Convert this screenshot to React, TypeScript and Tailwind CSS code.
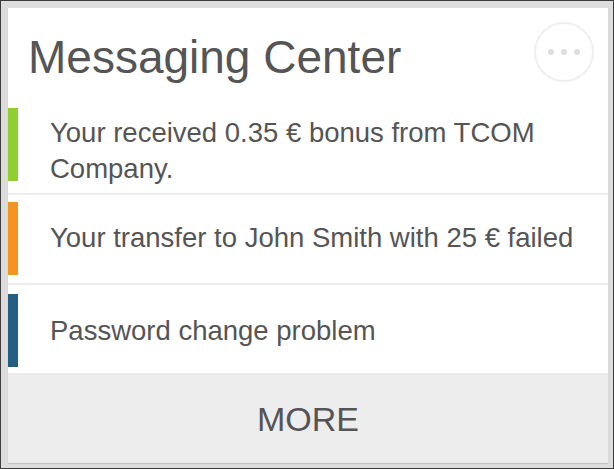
const messages = [
  {
    id: 1,
    text: "Your received 0.35 € bonus from TCOM Company.",
    bar: "bg-[#8fcf32]",
    row: "h-[96px]",
    barOffset: "mt-[9px]",
    textOffset: "pt-[16px]",
  },
  {
    id: 2,
    text: "Your transfer to John Smith with 25 € failed",
    bar: "bg-[#f7941d]",
    row: "h-[90px]",
    barOffset: "mt-[7px]",
    textOffset: "pt-[25px]",
  },
  {
    id: 3,
    text: "Password change problem",
    bar: "bg-[#245e82]",
    row: "h-[90px]",
    barOffset: "mt-[9px]",
    textOffset: "pt-[28px]",
  },
];

const MoreButton = () => (
  <button className="flex h-[60px] w-[60px] items-center justify-center gap-[7px] rounded-full border-2 border-[#efefef] bg-white">
    <span className="h-[6px] w-[6px] rounded-full bg-[#dedede]" />
    <span className="h-[6px] w-[6px] rounded-full bg-[#dedede]" />
    <span className="h-[6px] w-[6px] rounded-full bg-[#dedede]" />
  </button>
);

export default function App() {
  return (
    <div className="h-[469px] w-[614px] border border-[#3c3c3c] bg-[#dddddd] pb-[5px] pl-[7px] pr-[5px] pt-[7px] font-['Liberation_Sans',Arial,sans-serif] text-[#555555]">
      <div className="flex h-full flex-col bg-white shadow-[0_1px_1px_rgba(0,0,0,0.12)]">
        {/* header */}
        <div className="flex h-[91px] shrink-0 items-start justify-between pl-[20px] pr-[14px] pt-[14px]">
          <h1 className="mt-[12px] text-[46px] leading-none">Messaging Center</h1>
          <MoreButton />
        </div>

        {/* messages */}
        {messages.map((m) => (
          <div key={m.id} className={`flex shrink-0 items-start border-b-2 border-[#ececec] ${m.row}`}>
            <div className={`h-[73px] w-[10px] shrink-0 ${m.bar} ${m.barOffset}`} />
            <div className={`pl-[32px] pr-6 text-[27.5px] leading-[36px] ${m.textOffset}`}>{m.text}</div>
          </div>
        ))}

        {/* footer */}
        <div className="flex flex-1 items-center justify-center bg-[#ededed] text-[34px] leading-none">MORE</div>
      </div>
    </div>
  );
}
